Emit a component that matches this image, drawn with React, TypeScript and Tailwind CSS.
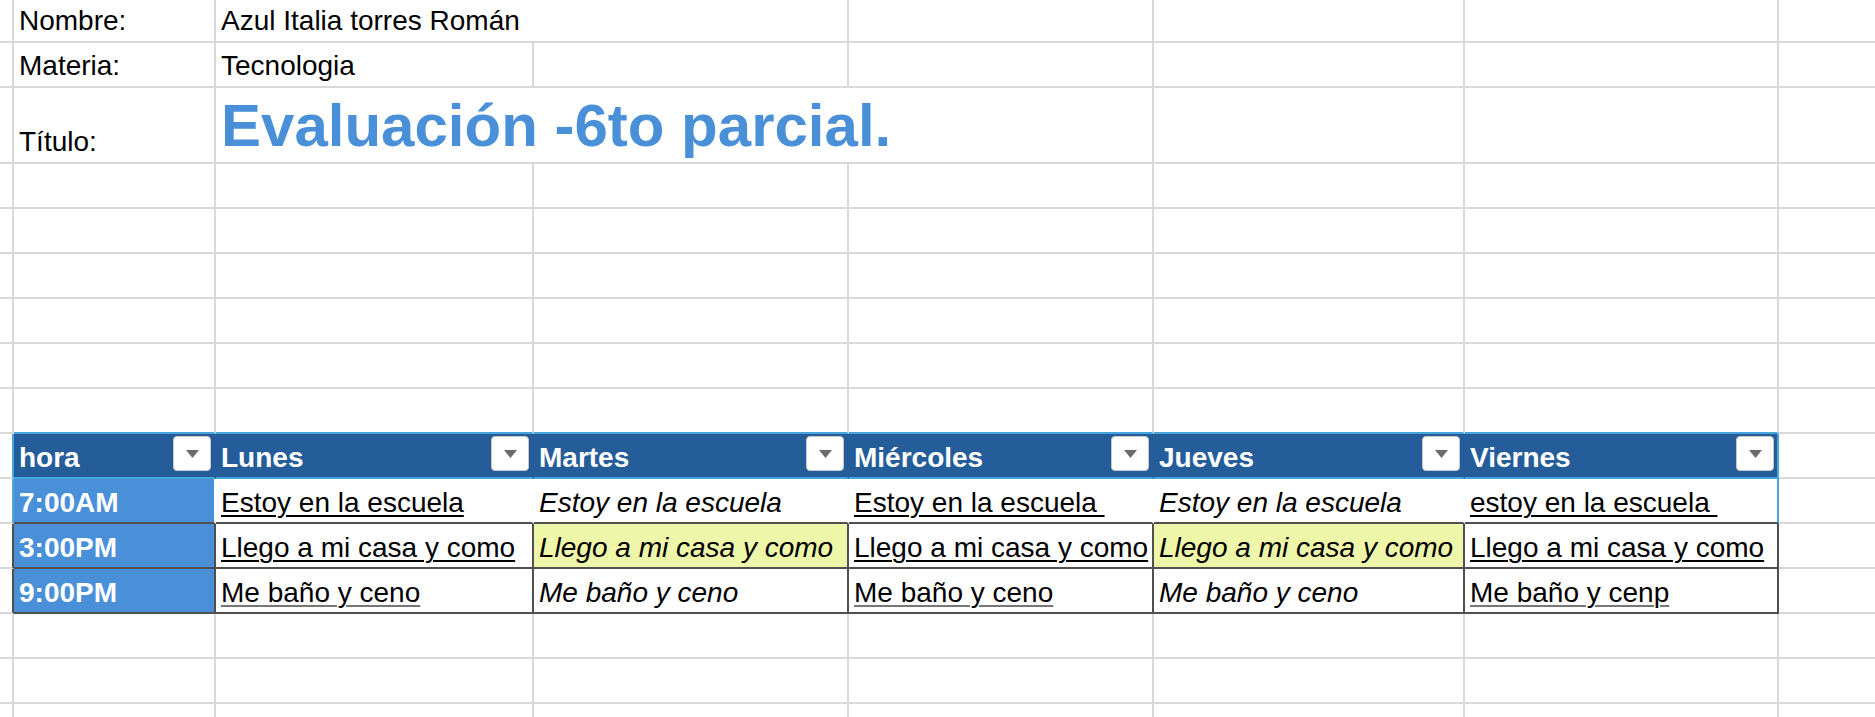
import React from 'react';

type Txt = { t: string; i?: boolean; u?: boolean; y?: boolean };

const filas: { h: string; cells: Txt[] }[] = [
    {
        h: '7:00AM',
        cells: [
            { t: 'Estoy en la escuela', u: true },
            { t: 'Estoy en la escuela', i: true },
            { t: 'Estoy en la escuela ', u: true },
            { t: 'Estoy en la escuela', i: true },
            { t: 'estoy en la escuela ', u: true },
        ],
    },
    {
        h: '3:00PM',
        cells: [
            { t: 'Llego a mi casa y como', u: true },
            { t: 'Llego a mi casa y como', i: true, y: true },
            { t: 'Llego a mi casa y como', u: true },
            { t: 'Llego a mi casa y como', i: true, y: true },
            { t: 'Llego a mi casa y como', u: true },
        ],
    },
    {
        h: '9:00PM',
        cells: [
            { t: 'Me baño y ceno', u: true },
            { t: 'Me baño y ceno', i: true },
            { t: 'Me baño y ceno', u: true },
            { t: 'Me baño y ceno', i: true },
            { t: 'Me baño y cenp', u: true },
        ],
    },
];

const dias = ['hora', 'Lunes', 'Martes', 'Miércoles', 'Jueves', 'Viernes'];

const celda = 'border-r-2 border-b-2 flex items-end overflow-hidden whitespace-pre pl-[5px]';

const Flecha = () => (
    <div className="mt-[2px] w-[38px] h-[35px] shrink-0 rounded-[4px] bg-white border border-[#c9c9c9] flex items-center justify-center">
        <svg width="13" height="8" viewBox="0 0 13 8">
            <polygon points="0,0 13,0 6.5,8" fill="#6b6b6b" />
        </svg>
    </div>
);

const Vacia = (props: { azul?: boolean, ultima?: boolean }) => (
    <>
        <div className={`border-r-2 border-[#d9d9d9] ${props.ultima ? '' : 'border-b-2'}`} />
        {[0, 1, 2, 3, 4, 5].map(i => (
            <div key={i} className={`border-r-2 border-r-[#d9d9d9] ${props.ultima ? '' : 'border-b-2'} ${props.azul ? 'border-b-[#45a5dc]' : 'border-b-[#d9d9d9]'}`} />
        ))}
        <div className={`border-[#d9d9d9] ${props.ultima ? '' : 'border-b-2'}`} />
    </>
);

export default function App() {
    return (
        <div className="w-[1875px] h-[717px] overflow-hidden bg-white text-black font-['Liberation_Sans',Arial,sans-serif] text-[28px] leading-none">
            <div className="grid h-full grid-cols-[14px_202px_318px_315px_305px_311px_314px_1fr] grid-rows-[43px_45px_76px_repeat(12,45px)_1fr]">
                {/* Nombre */}
                <div className="border-r-2 border-b-2 border-[#d9d9d9]" />
                <div className={`${celda} border-[#d9d9d9] pb-[6px]`}>Nombre:</div>
                <div className={`${celda} border-[#d9d9d9] pb-[6px] col-span-2`}>Azul Italia torres Román</div>
                <div className="border-r-2 border-b-2 border-[#d9d9d9]" />
                <div className="border-r-2 border-b-2 border-[#d9d9d9]" />
                <div className="border-r-2 border-b-2 border-[#d9d9d9]" />
                <div className="border-b-2 border-[#d9d9d9]" />

                {/* Materia */}
                <div className="border-r-2 border-b-2 border-[#d9d9d9]" />
                <div className={`${celda} border-[#d9d9d9] pb-[6px]`}>Materia:</div>
                <div className={`${celda} border-[#d9d9d9] pb-[6px]`}>Tecnologia</div>
                <div className="border-r-2 border-b-2 border-[#d9d9d9]" />
                <div className="border-r-2 border-b-2 border-[#d9d9d9]" />
                <div className="border-r-2 border-b-2 border-[#d9d9d9]" />
                <div className="border-r-2 border-b-2 border-[#d9d9d9]" />
                <div className="border-b-2 border-[#d9d9d9]" />

                {/* Titulo */}
                <div className="border-r-2 border-b-2 border-[#d9d9d9]" />
                <div className={`${celda} border-[#d9d9d9] pb-[6px]`}>Título:</div>
                <div className={`${celda} border-[#d9d9d9] pb-[6px] col-span-3 text-[60px] font-bold text-[#4a90d9]`}>Evaluación -6to parcial.</div>
                <div className="border-r-2 border-b-2 border-[#d9d9d9]" />
                <div className="border-r-2 border-b-2 border-[#d9d9d9]" />
                <div className="border-b-2 border-[#d9d9d9]" />

                <Vacia />
                <Vacia />
                <Vacia />
                <Vacia />
                <Vacia />
                <Vacia azul />

                {/* encabezado de la tabla */}
                <div className="border-r-2 border-b-2 border-r-[#45a5dc] border-b-[#d9d9d9]" />
                {dias.map((d, i) => (
                    <div key={d} className={`border-r-2 border-b-2 border-b-[#45a5dc] bg-[#245d9a] flex justify-between pl-[5px] pr-[3px] text-white font-bold ${i === 5 ? 'border-r-[#45a5dc]' : 'border-r-[#245d9a]'}`}>
                        <span className="self-end pb-[5px]">{d}</span>
                        <Flecha />
                    </div>
                ))}
                <div className="border-b-2 border-[#d9d9d9]" />

                {filas.map((f, r) => (
                    <React.Fragment key={f.h}>
                        <div className={`border-r-2 border-b-2 border-b-[#d9d9d9] ${r === 0 ? 'border-r-[#45a5dc]' : 'border-r-[#505050]'}`} />
                        <div className={`${celda} pb-[5px] bg-[#4a90d9] text-white font-bold border-b-[#505050] ${r === 0 ? 'border-r-white' : 'border-r-[#505050]'}`}>{f.h}</div>
                        {f.cells.map((c, i) => (
                            <div key={i} className={`${celda} pb-[5px] border-b-[#505050] ${c.y ? 'bg-[#eef7a9]' : 'bg-white'} ${r > 0 ? 'border-r-[#505050]' : i === 4 ? 'border-r-[#45a5dc]' : 'border-r-white'}`}>
                                <span className={`${c.i ? 'italic' : ''} ${c.u ? 'underline decoration-2 underline-offset-[3px]' : ''} ${r === 2 ? 'decoration-[#777777]' : 'decoration-black'}`}>{c.t}</span>
                            </div>
                        ))}
                        <div className="border-b-2 border-[#d9d9d9]" />
                    </React.Fragment>
                ))}

                <Vacia />
                <Vacia />
                <Vacia ultima />
            </div>
        </div>
    );
}
